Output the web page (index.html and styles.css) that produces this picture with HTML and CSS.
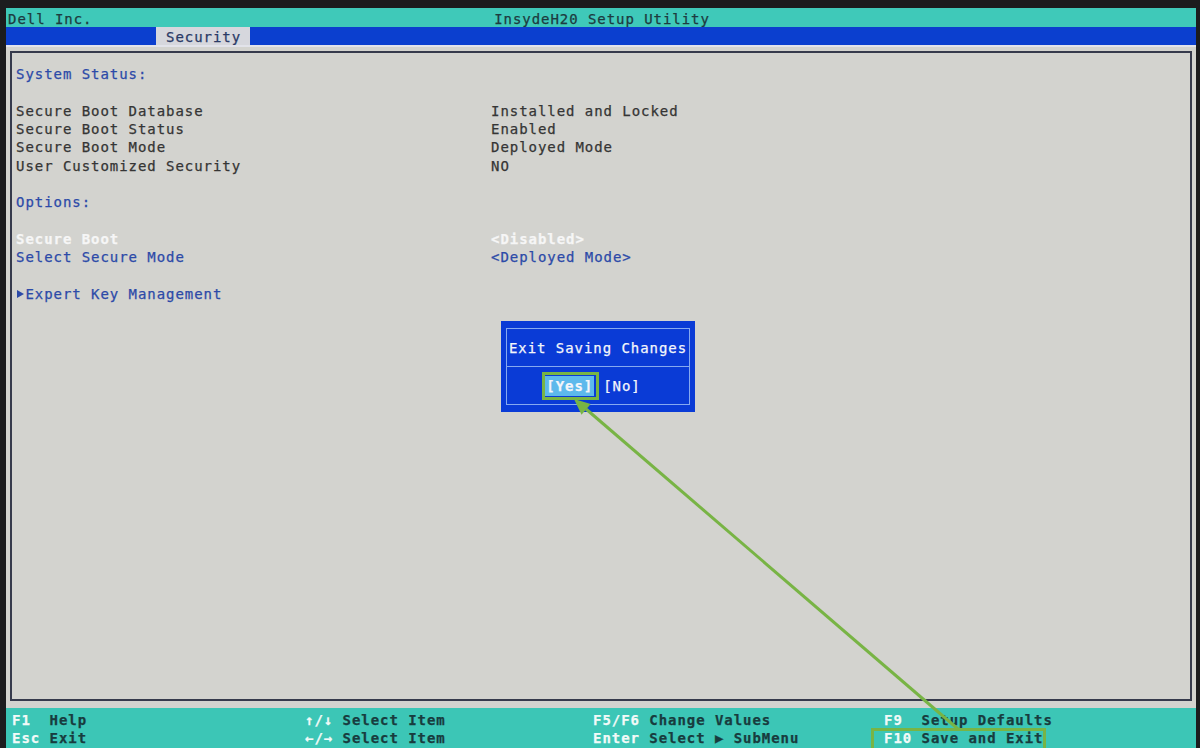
FILE: index.html
```html
<!DOCTYPE html>
<html lang="en">

<head>
    <meta charset="UTF-8">
    <meta name="viewport" content="width=device-width, initial-scale=1.0">
    <title>InsydeH20 Setup Utility - Security</title>
    <link rel="stylesheet" href="styles.css">
</head>

<body>
    <div class="screen">
        <!-- 顶部标题栏 -->
        <header class="title-bar">
            <span class="vendor">Dell Inc.</span>
            <span class="title">InsydeH20 Setup Utility</span>
        </header>
        <nav class="tabs">
            <span class="tab active">Security</span>
        </nav>

        <!-- 主体 选项列表 -->
        <main class="panel">
            <div class="frame">
                <div class="row head">System Status:</div>
                <div class="row"></div>
                <div class="row"><span>Secure Boot Database</span><span>Installed and Locked</span></div>
                <div class="row"><span>Secure Boot Status</span><span>Enabled</span></div>
                <div class="row"><span>Secure Boot Mode</span><span>Deployed Mode</span></div>
                <div class="row"><span>User Customized Security</span><span>NO</span></div>
                <div class="row"></div>
                <div class="row head">Options:</div>
                <div class="row"></div>
                <div class="row option selected"><span>Secure Boot</span><span>&lt;Disabled&gt;</span></div>
                <div class="row option"><span>Select Secure Mode</span><span>&lt;Deployed Mode&gt;</span></div>
                <div class="row"></div>
                <div class="row option"><span><span class="sub"><svg width="9" height="10" viewBox="0 0 9 10"><path d="M1 1 L8 5 L1 9 Z" fill="#2c4aa8"/></svg></span>Expert Key Management</span></div>
            </div>
        </main>

        <!-- 底部按键提示 -->
        <footer class="keys">
            <div><span class="key">F1  </span>Help</div>
            <div><span class="key">↑/↓ </span>Select Item</div>
            <div><span class="key">F5/F6 </span>Change Values</div>
            <div><span class="key">F9  </span>Setup Defaults</div>
            <div><span class="key">Esc </span>Exit</div>
            <div><span class="key">←/→ </span>Select Item</div>
            <div><span class="key">Enter </span>Select ▶ SubMenu</div>
            <div><span class="key">F10 </span>Save and Exit</div>
        </footer>

        <!-- 确认弹窗 -->
        <div class="dialog">
            <div class="dialog-box">
                <div class="dialog-title">Exit Saving Changes</div>
                <div class="dialog-buttons">
                    <span class="btn current">[Yes]</span>
                    <span class="btn">[No]</span>
                </div>
            </div>
        </div>

        <!-- 绿色标注 -->
        <svg class="callout" width="1200" height="748" viewBox="0 0 1200 748">
            <rect x="543.5" y="373.5" width="54" height="25" fill="none" stroke="#78b445" stroke-width="3"/>
            <rect x="872.5" y="729.5" width="172" height="22" fill="none" stroke="#78b445" stroke-width="3"/>
            <line x1="586" y1="409" x2="958" y2="729" stroke="#78b445" stroke-width="3"/>
            <polygon points="574,399 581.5,414.7 590.7,404.1" fill="#78b445"/>
        </svg>
    </div>
</body>

</html>
```

FILE: styles.css
```css
* {
    box-sizing: border-box;
}
html,
body {
    margin: 0;
    background: #1c1c1e;
}
body {
    font-family: "DejaVu Sans Mono", "Liberation Mono", monospace;
    font-size: 14px;
    letter-spacing: 0.95px;
    -webkit-text-stroke: 0.25px;
}
.screen {
    position: relative;
    width: 1200px;
    height: 748px;
    padding: 8px 4px 0 6px;
    display: flex;
    flex-direction: column;
    overflow: hidden;
}
/* 顶部 */
.title-bar {
    height: 19px;
    line-height: 19px;
    padding-top: 2px;
    background: #3fc9b9;
    color: #1d3b3f;
    display: grid;
    grid-template-columns: 1fr auto 1fr;
    padding-left: 2px;
}
.title-bar .title {
    grid-column: 2;
}
.title-bar .vendor {
    grid-column: 1;
    grid-row: 1;
}
.tabs {
    height: 18px;
    background: #0b3fcf;
    padding-left: 150px;
    display: flex;
}
.tab {
    line-height: 18px;
    padding: 1px 9px 0 10px;
}
.tab.active {
    background: #d6d7dd;
    color: #2a3a66;
}
/* 主体 */
.panel {
    flex: 1;
    display: flex;
    background: #d3d3cf;
    border-top: 2px solid #e2e3ea;
    padding: 4px 4px 7px 4px;
}
.frame {
    flex: 1;
    border: 2px solid #363a4c;
    padding: 12px 4px 10px;
    line-height: 18.35px;
    color: #353535;
}
.row {
    height: 18.35px;
    display: grid;
    grid-template-columns: 475px 1fr;
    white-space: pre;
}
.row.head {
    color: #2c4aa8;
}
.row.option {
    color: #2c4aa8;
}
.row.selected {
    color: #f6f6f6;
    font-weight: bold;
}
.sub {
    display: inline-block;
    width: 9.4px;
}
/* 底部 */
.keys {
    height: 40px;
    background: #3cc6b6;
    padding: 3px 0 0 6px;
    display: grid;
    grid-template-columns: 293px 288px 291px 1fr;
    grid-auto-rows: 18px;
    line-height: 18px;
    white-space: pre;
    color: #183c3e;
    font-weight: bold;
}
.keys .key {
    color: #f2faf8;
}
/* 弹窗 */
.dialog {
    position: absolute;
    left: 501px;
    top: 321px;
    width: 194px;
    height: 91px;
    background: #0a3bd6;
    padding: 7px 5px 7px 5px;
    color: #f4f6fb;
}
.dialog-box {
    height: 100%;
    border: 1px solid #86a9f0;
    display: grid;
    grid-template-rows: 38px 1fr;
}
.dialog-title {
    text-align: center;
    line-height: 38px;
    border-bottom: 1px solid #86a9f0;
}
.dialog-buttons {
    display: flex;
    justify-content: center;
    align-items: center;
    gap: 9px;
    padding-right: 10px;
}
.btn {
    line-height: 20px;
}
.btn.current {
    background: #5db9ec;
    font-weight: bold;
    padding: 0 1px;
}
.callout {
    position: absolute;
    left: 0;
    top: 0;
    pointer-events: none;
}
```
